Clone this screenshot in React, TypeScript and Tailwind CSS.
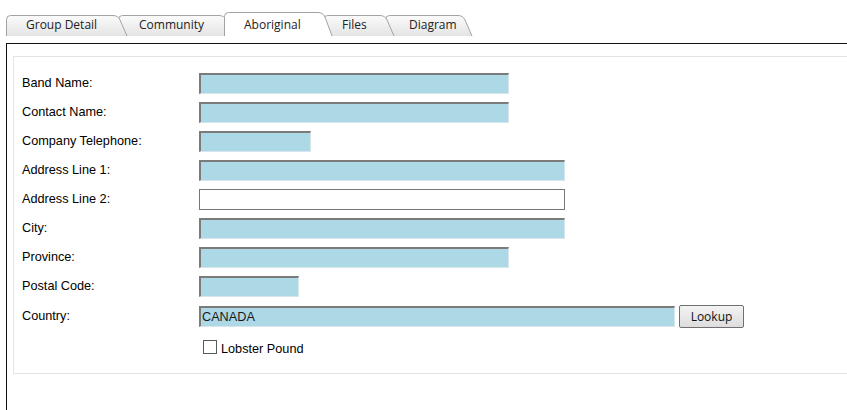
import React from "react";

type Tab = { label: string; w: number; active?: boolean; pl: number };

const tabs: Tab[] = [
  { label: "Group Detail", w: 122, pl: 20 },
  { label: "Community", w: 116, pl: 21 },
  { label: "Aboriginal", w: 109, active: true, pl: 20 },
  { label: "Files", w: 72, pl: 19 },
  { label: "Diagram", w: 88, pl: 24 },
];

function TabShape({ w, h, active }: { w: number; h: number; active?: boolean }) {
  const id = active ? "gA" : "gI";
  const d = `M0.5,${h} L0.5,4.5 Q0.5,0.5 4.5,0.5 L${w - 15},0.5 Q${w - 10},0.5 ${w - 8},5 L${w - 1},${h}`;
  return (
    <svg
      className="absolute inset-0 pointer-events-none"
      width={w}
      height={h}
      viewBox={`0 0 ${w} ${h}`}
    >
      <defs>
        <linearGradient id={id} x1="0" y1="0" x2="0" y2="1">
          <stop offset="0" stopColor={active ? "#ffffff" : "#fbfbfb"} />
          <stop offset="1" stopColor={active ? "#ffffff" : "#e4e4e4"} />
        </linearGradient>
      </defs>
      <path d={d} fill={`url(#${id})`} stroke="#a3a3a3" strokeWidth="1" />
    </svg>
  );
}

function TextInput({ w, blue = true, value }: { w: number; blue?: boolean; value?: string }) {
  if (!blue) {
    return <div className="h-[21px] border border-[#767676] bg-white" style={{ width: w }} />;
  }
  return (
    <div
      className="h-[21px] bg-[#add8e6] border-t-2 border-l-2 border-b border-r border-t-[#7b7b7b] border-l-[#7b7b7b] border-b-[#d6e6ec] border-r-[#d6e6ec] flex items-center pl-[1px] text-[12.7px] leading-none text-[#1a1a1a]"
      style={{ width: w }}
    >
      {value}
    </div>
  );
}

const rows: { label: string; w: number; blue?: boolean }[] = [
  { label: "Band Name:", w: 310 },
  { label: "Contact Name:", w: 310 },
  { label: "Company Telephone:", w: 112 },
  { label: "Address Line 1:", w: 366 },
  { label: "Address Line 2:", w: 366, blue: false },
  { label: "City:", w: 366 },
  { label: "Province:", w: 310 },
  { label: "Postal Code:", w: 100 },
];

export default function App() {
  return (
    <div
      className="w-[847px] h-[410px] bg-white overflow-hidden"
      style={{ fontFamily: '"Liberation Sans", Arial, sans-serif' }}
    >
      {/* tab strip */}
      <div className="flex items-end h-[24px] mt-[12px] pl-[6px]">
        {tabs.map((t, i) => {
          const h = t.active ? 24 : 21;
          return (
            <div
              key={t.label}
              className="relative mr-[-10px] shrink-0"
              style={{ width: t.w, height: h, zIndex: t.active ? 20 : 10 - i }}
            >
              <TabShape w={t.w} h={h} active={t.active} />
              <div
                className={`relative text-[12px] text-[#222] leading-none ${t.active ? "pt-[7px]" : "pt-[4px]"}`}
                style={{ fontFamily: '"Open Sans", "Noto Sans", sans-serif', paddingLeft: t.pl }}
              >
                {t.label}
              </div>
            </div>
          );
        })}
      </div>

      {/* panel */}
      <div className="mt-[7px] ml-[6px] h-[380px] border-t border-l border-[#111]">
        <div className="mt-[12px] ml-[6px] border border-r-0 border-[#e3e3e3] pt-[16px] pb-[18px] pl-[8px] text-[12.7px] text-black">
          <div className="flex flex-col gap-[8px]">
            {rows.map((r) => (
              <div key={r.label} className="flex items-center h-[21px]">
                <div className="w-[177px] shrink-0">{r.label}</div>
                <TextInput w={r.w} blue={r.blue !== false} />
              </div>
            ))}
            <div className="flex items-center h-[23px]">
              <div className="w-[177px] shrink-0">Country:</div>
              <TextInput w={476} value="CANADA" />
              <button
                className="ml-[4px] h-[23px] w-[65px] border border-[#707070] rounded-[2px] bg-gradient-to-b from-[#f3f3f3] to-[#dddddd] text-[12px] text-[#111] leading-none"
                style={{ fontFamily: '"Open Sans", "Noto Sans", sans-serif' }}
              >
                Lookup
              </button>
            </div>
          </div>
          <div className="flex items-start mt-[12px] ml-[181px] h-[15px]">
            <div className="w-[14px] h-[14px] border border-[#5a5a5a] bg-white" />
            <span className="ml-[4px] mt-[3px] text-[12.7px] leading-none">Lobster Pound</span>
          </div>
        </div>
      </div>
    </div>
  );
}
